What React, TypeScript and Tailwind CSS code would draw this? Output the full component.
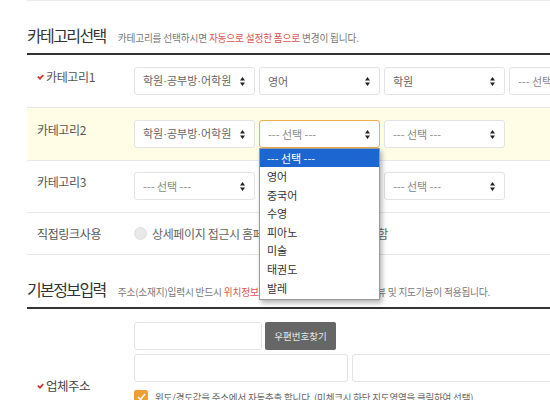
import React from "react";

const Arrows = () => (
  <svg width="5" height="9" viewBox="0 0 5 9" className="shrink-0">
    <path d="M2.5 0 L5 3.5 L0 3.5 Z M2.5 9 L5 5.5 L0 5.5 Z" fill="#222" />
  </svg>
);

const Check = () => (
  <svg width="7" height="6" viewBox="0 0 7 6" className="shrink-0">
    <path d="M0.8 2.6 L3 4.6 L6.2 1" fill="none" stroke="#d2302c" strokeWidth="1.8" />
  </svg>
);

// 가운데점은 CJK 폰트에서 전각으로 나와서 라틴 폰트로 찍는다
const Dotted = ({ text }: { text: string }) => (
  <>
    {text.split("·").map((part, i) => (
      <React.Fragment key={i}>
        {i > 0 && <span className="font-['Liberation_Sans',sans-serif]">·</span>}
        {part}
      </React.Fragment>
    ))}
  </>
);

type SelProps = { value: string; placeholder?: boolean; focus?: boolean };

const Sel = ({ value, placeholder, focus }: SelProps) => (
  <div
    className={`w-[121px] h-[28px] shrink-0 flex items-center justify-between pl-[8px] pr-[9px] rounded-[3px] bg-white border ${
      focus ? "border-[#f0ad4e]" : "border-[#e3e3e3]"
    }`}
  >
    <span className={`text-[11px] ${placeholder ? "text-[#888]" : "text-[#666]"} whitespace-nowrap`}>
      <Dotted text={value} />
    </span>
    <Arrows />
  </div>
);

const options = ["영어", "중국어", "수영", "피아노", "미술", "태권도", "발레"];

const Dropdown = () => (
  <div className="absolute left-0 top-[28px] w-[121px] bg-white border border-[#9a9a9a] shadow-[2px_3px_5px_rgba(0,0,0,0.3)] z-10 pb-[2px]">
    <div className="h-[18px] flex items-center pl-[7px] bg-[#1c66d2] text-white text-[11px]">--- 선택 ---</div>
    {options.map((o) => (
      <div key={o} className="h-[18.6px] flex items-center pl-[7px] text-[#333] text-[11px]">
        {o}
      </div>
    ))}
  </div>
);

const SectionHead = ({ title, children }: { title: string; children: React.ReactNode }) => (
  <div className="h-[54px] flex items-end pb-[6px] border-b-2 border-[#333]">
    <div className="flex items-baseline gap-[12px]">
      <h2 className="text-[16px] text-[#333] tracking-[-0.1em] leading-[24px]">{title}</h2>
      <p className="text-[9.7px] text-[#777] tracking-[-0.02em]">{children}</p>
    </div>
  </div>
);

const Label = ({ children, req }: { children: React.ReactNode; req?: boolean }) => (
  <div className="w-[107px] shrink-0 pl-[10px] h-[20px] flex items-center gap-[2px] text-[12px] tracking-[-0.03em] text-[#555]">
    {req && <Check />}
    <span>{children}</span>
  </div>
);

export default function App() {
  return (
    <div className="w-[550px] h-[400px] overflow-hidden bg-white font-['Noto_Sans_CJK_KR','Noto_Sans',sans-serif]">
      <div className="w-[800px] ml-[27px] border-t border-[#ececec]">
        <SectionHead title="카테고리선택">
          카테고리를 선택하시면 <span className="text-[#d9534f]">자동으로 설정한 폼으로</span> 변경이 됩니다.
        </SectionHead>

        {/* 카테고리1 */}
        <div className="flex items-start py-[12px] border-b border-[#e8e8e8]">
          <Label req>카테고리1</Label>
          <div className="flex gap-[4px]">
            <Sel value="학원·공부방·어학원" />
            <Sel value="영어" />
            <Sel value="학원" />
            <Sel value="--- 선택 ---" placeholder />
          </div>
        </div>

        {/* 카테고리2 */}
        <div className="flex items-start py-[12px] bg-[#fffde6] border-b border-[#e8e8e8]">
          <Label>카테고리2</Label>
          <div className="flex gap-[4px]">
            <Sel value="학원·공부방·어학원" />
            <div className="relative">
              <Sel value="--- 선택 ---" placeholder focus />
              <Dropdown />
            </div>
            <Sel value="--- 선택 ---" placeholder />
          </div>
        </div>

        {/* 카테고리3 */}
        <div className="flex items-start pt-[11px] pb-[12px] border-b border-[#e8e8e8]">
          <Label>카테고리3</Label>
          <div className="flex gap-[4px]">
            <Sel value="--- 선택 ---" placeholder />
            <Sel value="--- 선택 ---" placeholder />
            <Sel value="--- 선택 ---" placeholder />
          </div>
        </div>

        {/* 직접링크사용 */}
        <div className="flex items-center h-[42px] border-b border-[#e8e8e8]">
          <div className="w-[107px] shrink-0 pl-[10px] text-[12px] tracking-[-0.03em] text-[#555]">직접링크사용</div>
          <div className="flex items-center gap-[5px]">
            <span className="w-[13px] h-[13px] rounded-full bg-[#e8e8e8] border border-[#e0e0e0]" />
            <span className="text-[12px] text-[#666] tracking-[-0.03em] whitespace-nowrap">
              상세페이지 접근시 홈페이지로 바로 이동하도록 함
            </span>
          </div>
        </div>

        <SectionHead title="기본정보입력">
          주소(소재지)입력시 반드시{" "}
          <span className="text-[#d9534f]">위치정보(위도/경도)를 확인하셔야</span> 로드뷰 및 지도기능이 적용됩니다.
        </SectionHead>

        {/* 업체주소 */}
        <div className="flex items-start pt-[13px]">
          <div className="w-[107px] shrink-0 pl-[10px] pt-[55px] flex items-center gap-[2px] text-[12.5px] tracking-[-0.04em] text-[#444]">
            <Check />
            <span>업체주소</span>
          </div>
          <div className="flex flex-col gap-[4px]">
            <div className="flex gap-[3px]">
              <div className="w-[128px] h-[28px] border border-[#e3e3e3] rounded-[3px]" />
              <button className="w-[71px] h-[28px] bg-[#666] rounded-[2px] text-[#e6e6e6] text-[9.5px]">우편번호찾기</button>
            </div>
            <div className="flex gap-[4px]">
              <div className="w-[214px] h-[28px] border border-[#e3e3e3] rounded-[3px]" />
              <div className="w-[300px] h-[28px] border border-[#e3e3e3] rounded-[3px]" />
            </div>
            <div className="flex items-center gap-[7px] mt-[4px]">
              <span className="w-[14px] h-[14px] rounded-[2px] bg-[#f0a032] flex items-center justify-center">
                <svg width="9" height="8" viewBox="0 0 9 8">
                  <path d="M1 4 L3.5 6.5 L8 1" fill="none" stroke="#fff" strokeWidth="1.6" />
                </svg>
              </span>
              <span className="text-[9.5px] text-[#666] tracking-[-0.02em] whitespace-nowrap">
                위도/경도값을 주소에서 자동추출 합니다. (미체크시 하단 지도영역을 클릭하여 선택)
              </span>
            </div>
          </div>
        </div>
      </div>
    </div>
  );
}
